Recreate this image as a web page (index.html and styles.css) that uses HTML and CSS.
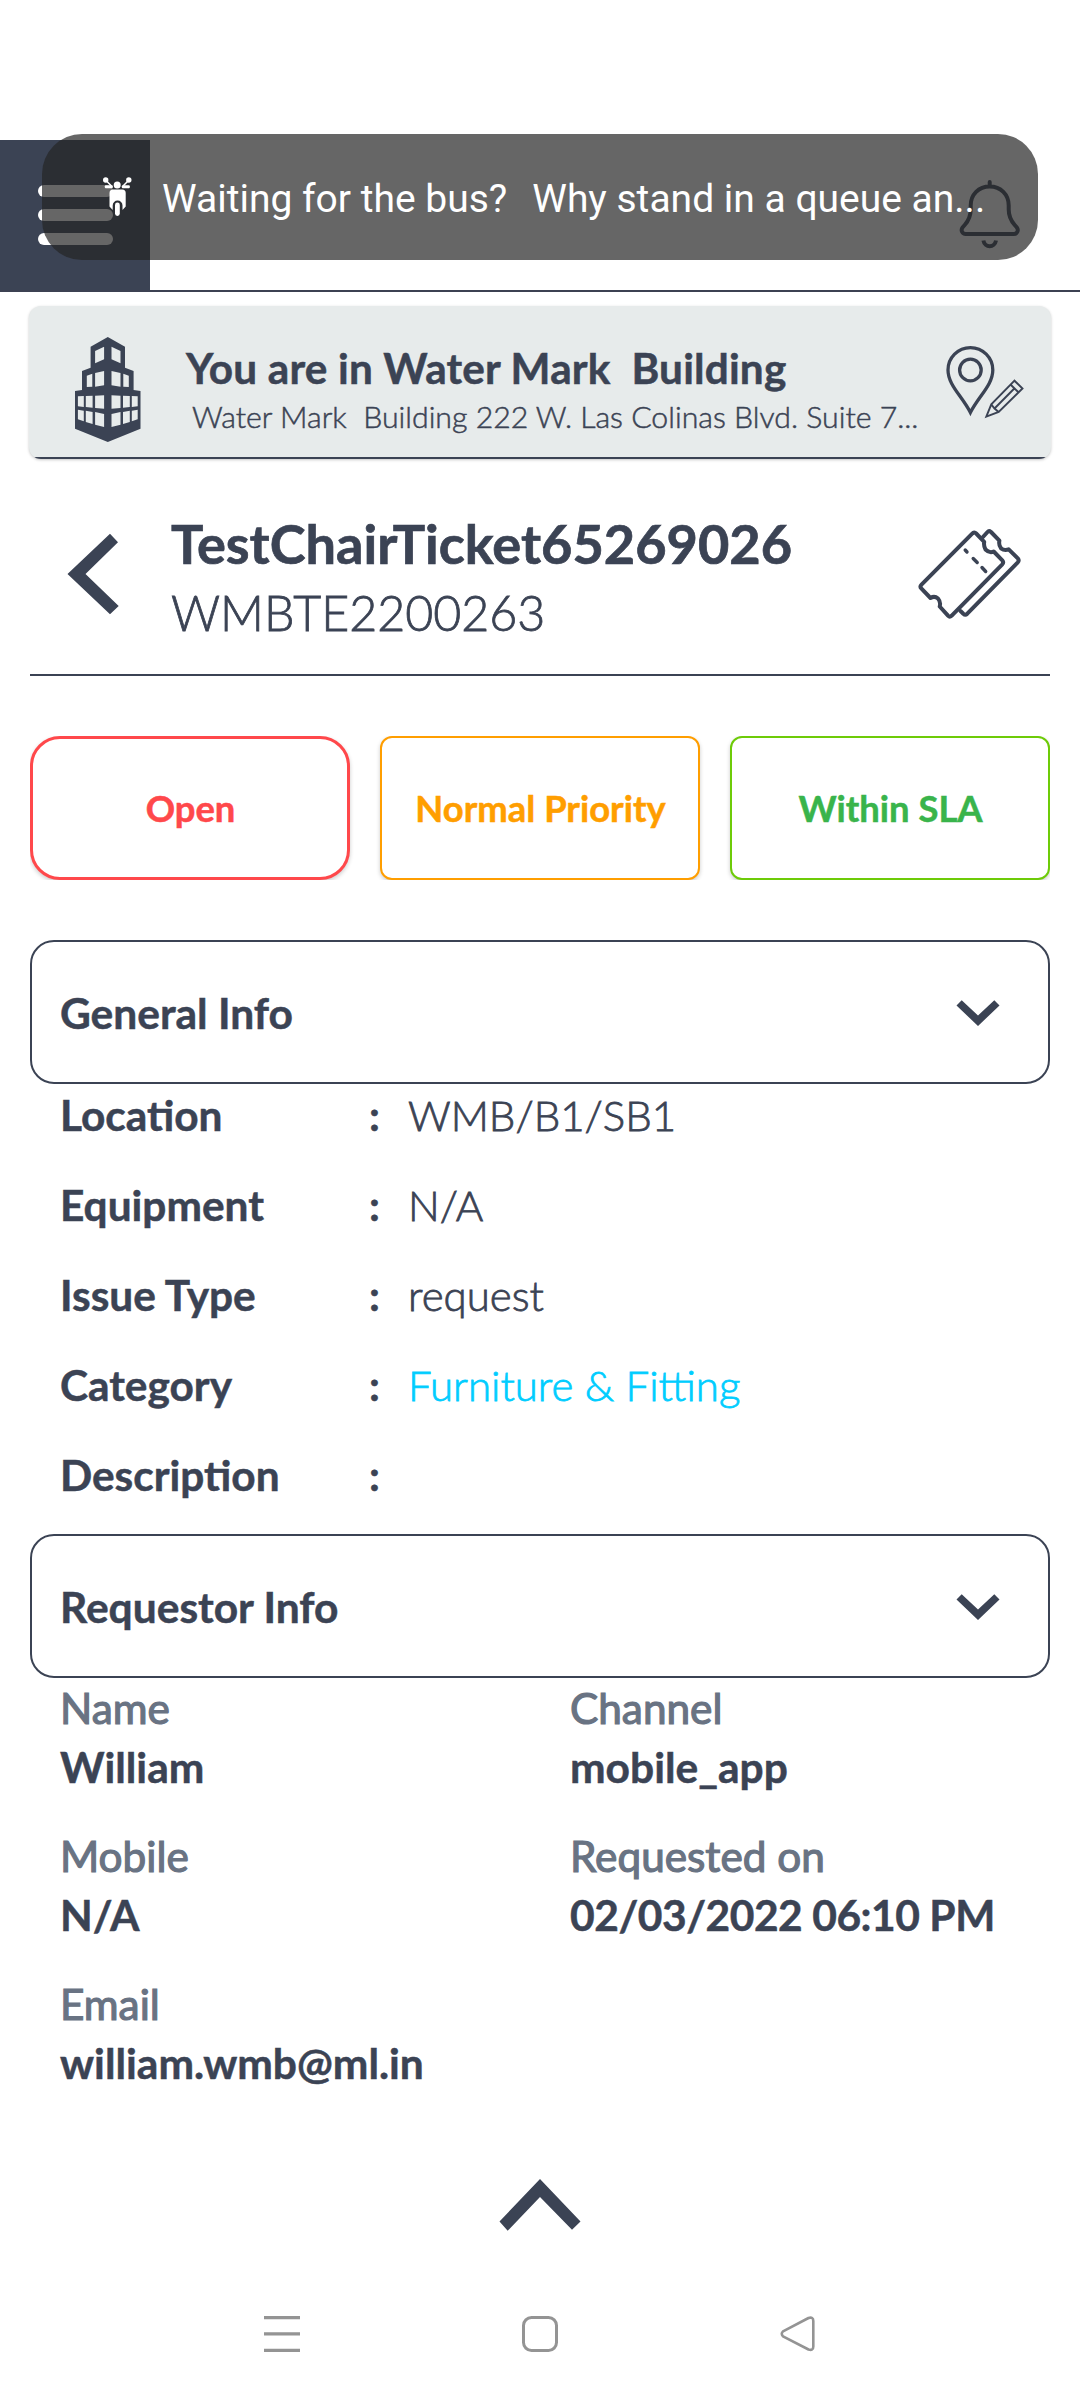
FILE: index.html
```html
<!DOCTYPE html>
<html lang="en">
<head>
<meta charset="utf-8">
<title>Ticket details</title>
<link rel="stylesheet" href="styles.css">
</head>
<body>
<div class="screen">
  <header class="topbar">
    <button class="menu" aria-label="Menu"><span class="menu-bar"></span><span class="menu-bar"></span><span class="menu-bar"></span></button>
    <svg class="bell" viewBox="959 178 62 72" fill="none" stroke="currentColor" stroke-width="4" stroke-linecap="round" stroke-linejoin="round">
      <path d="M989.7 182v4M989.7 186.500c-11 0-19 8-19 19v4c0 7-2 11-6 15.500l-2 2.300c-2.300 3-.5 6.700 3 6.700h48c3.500 0 5.300-3.700 3-6.700l-2-2.300c-4-4.500-6-8.500-6-15.500v-4c0-11-8-19-19-19z"/>
      <path d="M983.400 240.500c1.300 7.500 11.300 7.500 12.600 0" stroke-linecap="butt"/>
    </svg>
  </header>

  <section class="location">
    <svg class="building" viewBox="0 0 66 105" fill="currentColor" fill-rule="evenodd">
      <path d="M32.800 0 50 9.700V30.700L58.600 34V53L65.500 54V91.700L32.800 105 0 91.700V54L7 53V34L15.600 30.700V9.700z
        M36.500 9.700 45.500 14V26.300L36.500 22.300z M29.100 9.700 20.100 14V26.300L29.100 22.300z
        M36.500 34 45.500 36V49.700L36.500 48.300z M29.100 34 20.100 36V49.700L29.100 48.300z
        M48.300 36.700 53.800 38.700V50L48.300 49.700z M17.300 36.700 11.800 38.700V50L17.300 49.700z
        M36.500 58.300 45.500 58.700V71L36.500 71.700z M29.100 58.300 20.100 58.700V71L29.100 71.700z
        M48 58.700 54.800 59V70L48 70.700z M17.600 58.700 10.800 59V70L17.600 70.700z
        M56.800 59 62.700 59.300V69.300L56.800 70z M8.800 59 2.900 59.300V69.300L8.800 70z
        M36.500 77 45.500 75V87.700L36.500 90z M29.100 77 20.100 75V87.700L29.100 90z
        M48 75 54.800 73.700V85L48 87z M17.600 75 10.800 73.700V85L17.600 87z
        M56.800 73.700 62.700 72.700V82.300L56.800 84.300z M8.800 73.700 2.900 72.700V82.300L8.800 84.300z"/>
    </svg>
    <div class="location-text">
      <div class="location-name">You are in Water Mark&nbsp; Building</div>
      <div class="location-address">Water Mark&nbsp; Building 222 W. Las Colinas Blvd. Suite 7...</div>
    </div>
    <svg class="pin" viewBox="945 345 80 75" fill="none" stroke="currentColor" stroke-width="3.300">
      <path d="M970.400 412.500C962 396 948 385 948 370a22.400 22.400 0 0 1 44.800 0C992.800 385 978.800 396 970.400 412.500z" stroke-linejoin="miter"/>
      <circle cx="970.400" cy="370" r="10.800"/>
      <path d="M986.300 416.700 991.300 404.300 1014.500 380.700 1022.500 388.500 998.700 412zM1010.500 384.500 1018.700 392.500M1014.300 388.500 994.500 408.500M991.300 404.300 994.500 408.500 998.700 412" stroke-width="1.900"/>
    </svg>
  </section>

  <main class="content">
    <section class="ticket-head">
      <svg class="back" viewBox="67 533 52 82" fill="currentColor"><path d="M67.500 574 110 533.700 118 542.300 85.500 574 118.700 606 110 614.300z"/></svg>
      <div class="ticket-text">
        <h1 class="ticket-title">TestChairTicket65269026</h1>
        <div class="ticket-code">WMBTE2200263</div>
      </div>
      <svg class="tickets" viewBox="918 528 104 92" fill="none" stroke="currentColor" stroke-width="4" stroke-linejoin="round" stroke-linecap="round">
        <path d="M972.200 533.700Q974.200 531.500 976.200 533.500L984.200 541.800Q983.500 546 985.500 549.500 989.500 553.500 993.700 551.500L1002.300 560.300Q1004 562.300 1002.300 564.300L951.500 615.800Q949.700 617.500 948 615.700L939.700 606.500Q941 602 938 598.500 934.500 595.500 930.500 598L921.500 588.700Q919.500 586.700 921.500 584.700z"/>
        <path d="M982.500 537.500 987.500 532Q989 530.300 991 532L999.400 540.700Q998.500 545 1001 548.300 1004.500 551 1008.700 549.300L1017.800 558.300Q1019.500 560.300 1017.800 562.300L967.300 613.700Q965.300 615.500 963.300 613.700L960.500 611"/>
        <path d="M965.200 550 967 552M973.200 558.500 977.200 562.500M982 567.500 985.700 571.500" stroke-width="3.400"/>
      </svg>
    </section>

    <section class="badges">
      <div class="badge badge-open">Open</div>
      <div class="badge badge-priority">Normal Priority</div>
      <div class="badge badge-sla">Within SLA</div>
    </section>

    <section class="panel">
      <h2 class="panel-title">General Info
        <svg class="chevron" viewBox="0 0 44 28" fill="currentColor"><path d="M.5 5.500 5.700.3 22 15.500 38.300.3 43.500 5.500 22 26z"/></svg>
      </h2>
      <dl class="facts">
        <dt>Location</dt><dd class="colon">:</dd><dd>WMB/B1/SB1</dd>
        <dt>Equipment</dt><dd class="colon">:</dd><dd>N/A</dd>
        <dt>Issue Type</dt><dd class="colon">:</dd><dd>request</dd>
        <dt>Category</dt><dd class="colon">:</dd><dd class="link">Furniture &amp; Fitting</dd>
        <dt>Description</dt><dd class="colon">:</dd><dd></dd>
      </dl>
    </section>

    <section class="panel">
      <h2 class="panel-title">Requestor Info
        <svg class="chevron" viewBox="0 0 44 28" fill="currentColor"><path d="M.5 5.500 5.700.3 22 15.500 38.300.3 43.500 5.500 22 26z"/></svg>
      </h2>
      <div class="person">
        <div class="field"><div class="label">Name</div><div class="value">William</div></div>
        <div class="field"><div class="label">Channel</div><div class="value">mobile_app</div></div>
        <div class="field"><div class="label">Mobile</div><div class="value">N/A</div></div>
        <div class="field"><div class="label">Requested on</div><div class="value value-date">02/03/2022 06:10 PM</div></div>
        <div class="field"><div class="label">Email</div><div class="value">william.wmb@ml.in</div></div>
      </div>
    </section>
  </main>

  <div class="expand">
    <svg class="expand-icon" viewBox="499 2178 82 54" fill="currentColor"><path d="M540 2179 580.500 2221.500 572 2229.700 540 2197 507.700 2230.700 499.500 2221.500z"/></svg>
  </div>

  <nav class="navbar">
    <svg class="nav-icon" viewBox="0 0 36 36" fill="none" stroke="currentColor" stroke-width="3.200"><path d="M0 1.700H36M0 17.800H36M0 34.300H36"/></svg>
    <svg class="nav-icon" viewBox="0 0 36 36" fill="none" stroke="currentColor" stroke-width="3"><rect x="1.500" y="1.500" width="33" height="33" rx="8"/></svg>
    <svg class="nav-icon" viewBox="0 0 36 36" fill="none" stroke="currentColor" stroke-width="2.600" stroke-linejoin="round"><path d="M3 15.300 28.500 2Q33.300.5 33.300 5V30.500Q33.300 35 28.500 33.500L3 20.300Q.5 17.800 3 15.300z"/></svg>
  </nav>

  <div class="toast">
    <svg class="scooter" viewBox="102 177 30 41" fill="#fff">
      <circle cx="105.700" cy="180" r="2.700"/><circle cx="128.800" cy="180" r="2.700"/><circle cx="117.200" cy="185" r="3.500"/>
      <path d="M106 180.500 111.500 186M128.500 180.500 123 186" stroke="#fff" stroke-width="1.500"/>
      <rect x="104.800" y="185.200" width="8" height="3" rx="1"/><rect x="121.800" y="185.200" width="8" height="3" rx="1"/>
      <path d="M113 189.500h9.200a3.500 3.500 0 0 1 3.500 3.500v13.500l-3.200 3.500v-4.500a4.800 4.800 0 0 0-9.800 0V210l-3.200-3.500V193a3.500 3.500 0 0 1 3.500-3.500z"/>
      <rect x="115" y="202.500" width="4.800" height="13.500" rx="2.400"/>
    </svg>
    <span class="toast-text"><span>Waiting for the bus?</span><span>Why stand in a queue an...</span></span>
  </div>
</div>
</body>
</html>
```
FILE: styles.css
```css
* { box-sizing: border-box; margin: 0; padding: 0; }
body { background: #fff; color: #3b4354; font-family: Lato, sans-serif; }
svg { display: block; flex: none; }
.screen { position: relative; width: 1080px; height: 2400px; padding-top: 140px; background: #fff; overflow: hidden; }

.topbar { display: flex; justify-content: space-between; height: 152px; border-bottom: 2px solid #3c4152; }
.menu { display: flex; flex-direction: column; gap: 12px; width: 150px; height: 150px; padding: 45px 37.500px 0; border: 0; background: #3b4354; }
.menu-bar { height: 12px; border-radius: 6px; background: #fff; }
.bell { width: 62px; height: 72px; margin: 38px 59px 0 0; }

.location { display: flex; align-items: flex-start; height: 153px; margin: 14px 29px 0; padding: 31px 26px 0 46px; border-radius: 12px; background: linear-gradient(#3b4354, #3b4354) bottom / 100% 2px no-repeat #e7ebeb; box-shadow: 0 1px 3px rgba(0,0,0,.22); }
.building { width: 66px; height: 105px; }
.location-text { flex: 1; padding: 6px 0 0 45px; white-space: nowrap; }
.location-name { font-size: 42.300px; font-weight: 700; line-height: 50px; letter-spacing: .18px; -webkit-text-stroke: .5px; }
.location-address { padding: 1px 0 0 6px; font-size: 30.250px; font-weight: 300; line-height: 44px; -webkit-text-stroke: .5px; }
.pin { width: 80px; height: 75px; margin-top: 8px; }

.content { padding: 0 30px; }
.ticket-head { display: flex; height: 217px; padding: 0 28px 0 37px; border-bottom: 2px solid #3b4354; }
.back { width: 52px; height: 82px; margin-top: 74px; }
.ticket-text { flex: 1; padding: 52px 0 0 52px; }
.ticket-title { font-size: 54.100px; font-weight: 700; line-height: 66px; -webkit-text-stroke: .7px; }
.ticket-code { font-size: 48.300px; font-weight: 300; line-height: 70px; -webkit-text-stroke: .8px; }
.tickets { width: 104px; height: 92px; margin-top: 69px; }

.badges { display: grid; grid-template-columns: repeat(3, 1fr); gap: 30px; margin-top: 60px; overflow: hidden; }
.badge { height: 144px; padding-left: 1px; border: 2px solid; border-radius: 12px; background: #fff; font-size: 36.400px; font-weight: 700; line-height: 140px; text-align: center; box-shadow: 0 2px 4px rgba(0,0,0,.2); -webkit-text-stroke: .5px; }
.badge-open { border-width: 3px; border-radius: 30px; color: #ff484b; line-height: 138px; }
.badge-priority { color: #ff9e00; }
.badge-sla { border-color: #6dcb08; color: #39b44b; }

.badges + .panel { margin-top: 60px; }
.panel-title { display: flex; align-items: center; justify-content: space-between; height: 144px; padding: 0 48px 0 28px; border: 2px solid #3b4354; border-radius: 24px; font-size: 42.500px; font-weight: 700; -webkit-text-stroke: .5px; }
.chevron { width: 44px; height: 28px; margin-top: 4px; }
.facts { display: grid; grid-template-columns: 308px 40px 1fr; grid-auto-rows: 90px; padding: 0 30px; font-size: 42px; line-height: 62px; }
.facts dt, .facts .colon { font-size: 42.400px; font-weight: 700; -webkit-text-stroke: .5px; }
.facts dd { font-weight: 300; -webkit-text-stroke: .8px; }
.facts .colon { padding-left: 1px; }
.facts .link { color: #00cdff; }
.person { display: grid; grid-template-columns: 510px 1fr; grid-auto-rows: 148px; padding-left: 30px; font-size: 42.300px; line-height: 59px; }
.label { color: #697383; font-weight: 400; -webkit-text-stroke: 1.200px #697383; }
.value { font-size: 42.500px; font-weight: 700; white-space: nowrap; -webkit-text-stroke: .5px; }
.value-date { letter-spacing: -.45px; }

.expand { display: flex; justify-content: center; margin-top: 56px; }
.expand-icon { width: 82px; height: 54px; }
.navbar { display: flex; justify-content: space-between; margin-top: 84px; padding: 0 264px; color: #949494; }
.nav-icon { width: 36px; height: 36px; }

/* Floating notification laid over the app bar */
.toast { position: absolute; left: 42px; top: 134px; display: flex; align-items: center; width: 996px; height: 126px; padding-left: 60px; border-radius: 40px; background: rgba(37,37,37,.7); color: #fff; }
.scooter { width: 30px; height: 41px; }
.toast-text { display: flex; gap: 25px; margin-left: 30px; padding-top: 4px; font: 39px/46px Roboto, sans-serif; white-space: nowrap; }
```
